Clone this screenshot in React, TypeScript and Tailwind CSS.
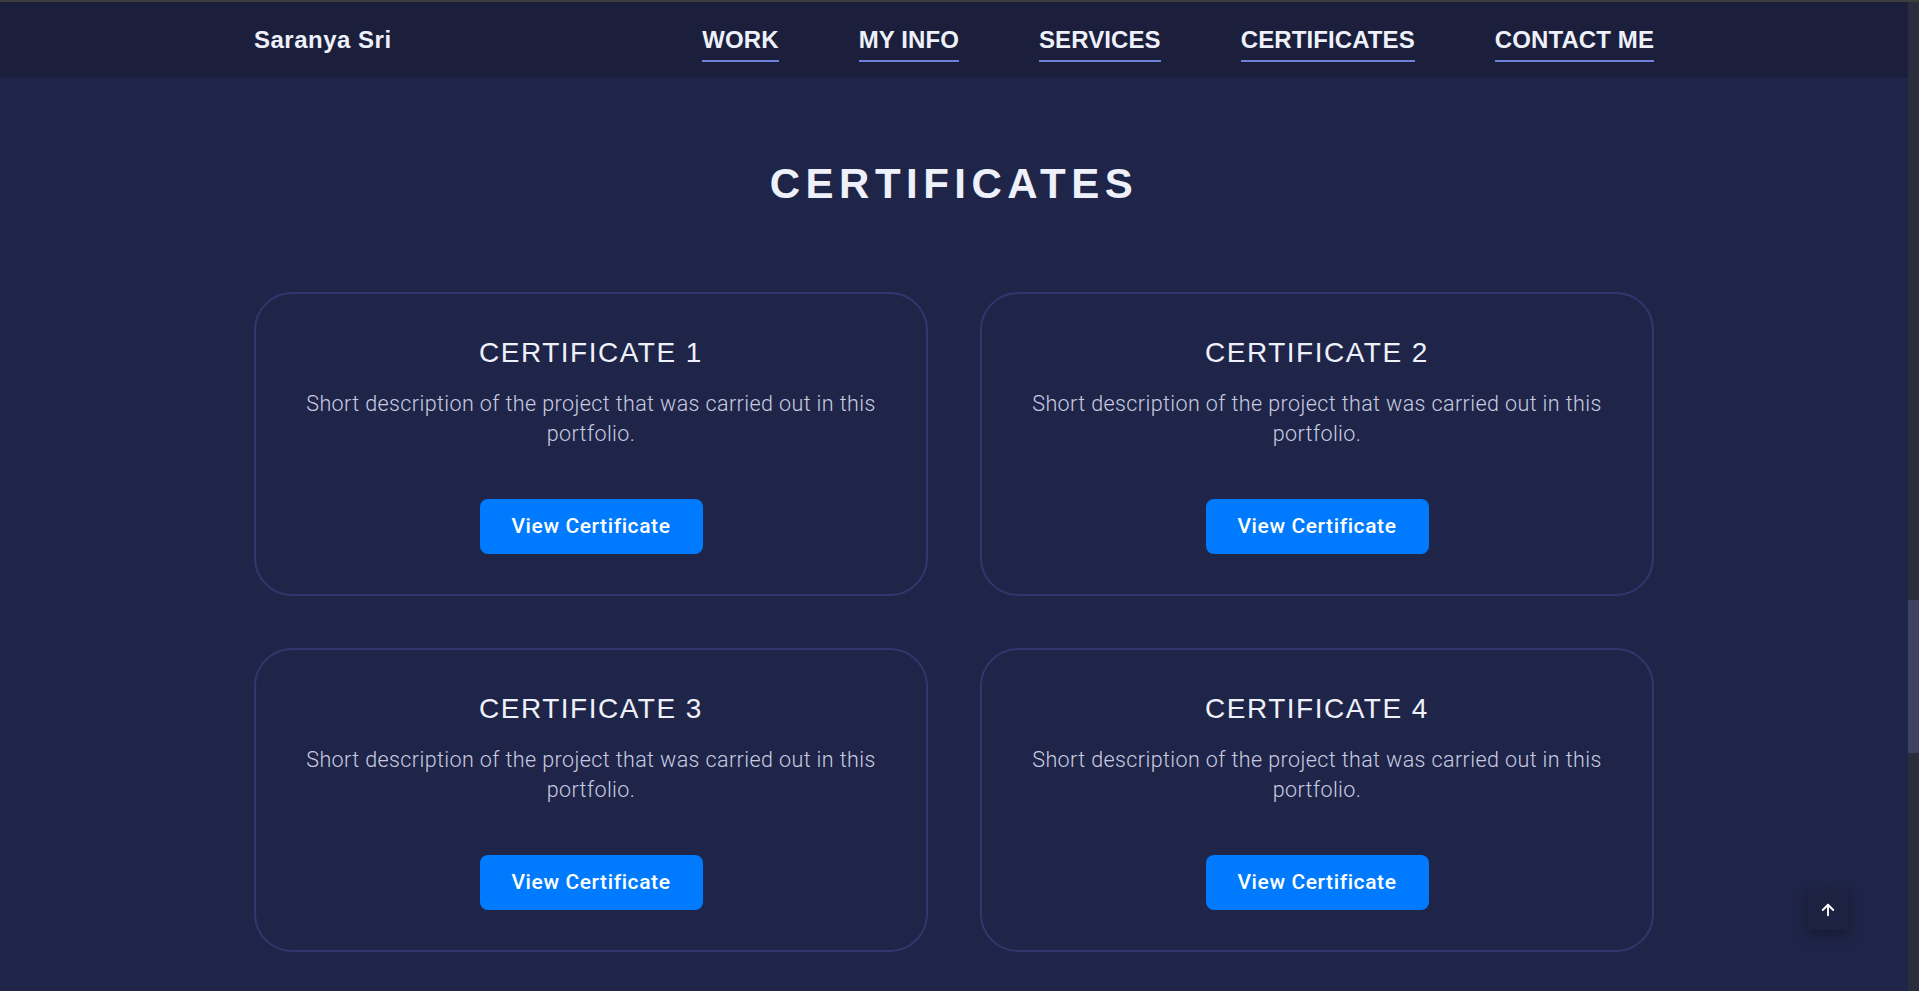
import { ArrowUp } from "lucide-react";

const NAV = ["WORK", "MY INFO", "SERVICES", "CERTIFICATES", "CONTACT ME"];
const CERTS = [1, 2, 3, 4];

const head = { fontFamily: '"Liberation Sans", Arial, sans-serif' };
const body = { fontFamily: 'Roboto, "Open Sans", sans-serif' };

function CertCard({ n }: { n: number }) {
  return (
    <div className="flex h-[304px] flex-col items-center rounded-[38px] border-2 border-[#31376c] px-10 pt-[45px] pb-10 text-center">
      <h3 style={head} className="text-[28px] leading-[28px] tracking-[1.5px] text-[#eef0fa]">
        CERTIFICATE {n}
      </h3>
      <p style={body} className="mt-[22px] text-[21.5px] leading-[30px] font-light tracking-[0.4px] text-[#c9cce1]">
        Short description of the project that was carried out in this portfolio.
      </p>
      <button
        style={body}
        className="mt-auto h-[55px] w-[223px] rounded-lg bg-[#007bff] text-[21px] font-medium tracking-[0.6px] text-white"
      >
        View Certificate
      </button>
    </div>
  );
}

export default function App() {
  return (
    <div className="flex h-screen w-full flex-col overflow-hidden bg-[#1f2548]">
      <div className="h-[2px] w-full bg-[#3d3d3f]" />
      <div className="flex min-h-0 flex-1">
        <div className="flex min-w-0 flex-1 flex-col">
          <header className="h-[76px] bg-[#1b1f3b] pt-[26px]">
            <div className="mx-auto flex max-w-[1400px] items-start justify-between">
              <a style={head} className="text-[24px] leading-[24px] font-bold tracking-[0.5px] text-[#eef0fa]">
                Saranya Sri
              </a>
              <nav className="flex gap-20">
                {NAV.map(item => (
                  <a key={item} className="flex flex-col">
                    <span style={head} className="text-[24px] leading-[24px] font-bold tracking-[0.1px] text-[#eef0fa]">
                      {item}
                    </span>
                    <span className="mt-2 h-[2px] w-full bg-[#6f80d8]" />
                  </a>
                ))}
              </nav>
            </div>
          </header>

          <main className="pt-[85px]">
            <h2 style={head} className="text-center text-[42px] leading-[42px] font-bold tracking-[5.5px] text-[#eef0fa]">
              CERTIFICATES
            </h2>
            <div className="mx-auto mt-[87px] grid max-w-[1400px] grid-cols-2 gap-[52px]">
              {CERTS.map(n => (
                <CertCard key={n} n={n} />
              ))}
            </div>
          </main>
        </div>

        {/* fake scrollbar */}
        <div className="flex w-[11px] flex-col bg-[#2b2d3c]">
          <div className="h-[598px]" />
          <div className="h-[153px] bg-[#3f4261]" />
        </div>
      </div>

      <button className="fixed right-[71px] bottom-[61px] flex h-10 w-10 items-center justify-center bg-[#1d2243] shadow-[0_4px_14px_rgba(0,0,0,0.35)]">
        <ArrowUp size={18} strokeWidth={2.5} className="text-white" />
      </button>
    </div>
  );
}
